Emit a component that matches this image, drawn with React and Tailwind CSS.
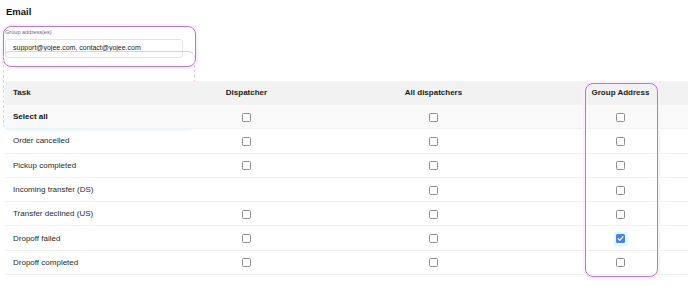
const rows = [
  { task: "Select all", bold: true, dispatcher: true, all: true, group: true },
  { task: "Order cancelled", dispatcher: true, all: true, group: true },
  { task: "Pickup completed", dispatcher: true, all: true, group: true },
  { task: "Incoming transfer (DS)", dispatcher: false, all: true, group: true },
  { task: "Transfer declined (US)", dispatcher: true, all: true, group: true },
  { task: "Dropoff failed", dispatcher: true, all: true, group: true, checked: true },
  { task: "Dropoff completed", dispatcher: true, all: true, group: true },
];

function Checkbox({ checked }) {
  if (checked) {
    return (
      <div className="w-[14px] h-[14px] bg-[#dcfbff] flex items-center justify-center">
        <div className="w-[9px] h-[9px] rounded-[1.5px] bg-[#4f7fe0] flex items-center justify-center">
          <svg width="7" height="7" viewBox="0 0 10 10" fill="none">
            <path d="M1.5 5.2 L4 7.6 L8.6 2.4" stroke="white" strokeWidth="1.8" strokeLinecap="round" strokeLinejoin="round" />
          </svg>
        </div>
      </div>
    );
  }
  return <div className="w-[9px] h-[9px] rounded-[1.5px] border border-[#8d8d8d] bg-white" />;
}

export default function App() {
  return (
    <div className="relative w-[688px] h-[287px] overflow-hidden bg-white font-['Liberation_Sans',Arial,sans-serif] text-[#222]">
      {/* Heading + group address input */}
      <div className="pl-[6px] pt-[5px]">
        <h2 className="text-[9.5px] font-bold leading-[13px] text-[#111]">Email</h2>
      </div>
      <div className="ml-[3px] mt-[8px] w-[193px] h-[41px] rounded-[8px] border-[1.5px] border-[#b27ad4] shadow-[0_0_0_2px_#fdeefb] relative">
        <div className="pl-[1px] pt-[2px] text-[5.6px] leading-[7px] text-[#7a5a86]">Group address(es)</div>
        <div className="ml-[1px] mt-[3px] w-[178px] h-[19px] rounded-[3px] border border-[#e3e3e3] flex items-center pl-[7px] text-[7px] text-[#1a1a1a]">
          support@yojee.com, contact@yojee.com
        </div>
      </div>

      {/* faint overlay annotation */}
      <div className="absolute left-[3px] top-[51px] w-[192px] h-[78px] rounded-[7px] border border-dashed [border-top-style:solid] [border-bottom-style:solid] border-[#f6bdf0] shadow-[0_2px_0_0_#e3fdff] pointer-events-none" />

      {/* Table */}
      <div className="absolute left-[5px] top-[81px] w-[750px]">
        <div className="grid grid-cols-[148px_187px_187px_187px] h-[24px] bg-[#f2f2f2] items-center text-[8px] font-bold text-[#1a1a1a]">
          <div className="pl-[8px]">Task</div>
          <div className="text-center">Dispatcher</div>
          <div className="text-center">All dispatchers</div>
          <div className="text-center">Group Address</div>
        </div>
        {rows.map((r) => (
          <div
            key={r.task}
            className={`grid grid-cols-[148px_187px_187px_187px] h-[24.3px] items-center border-b border-[#f0f0f0] text-[8px] ${
              r.bold ? "bg-[#f9f9f9] font-bold text-[#111]" : "text-[#2a2a2a]"
            }`}
          >
            <div className="pl-[8px] pt-[1px]">{r.task}</div>
            <div className="flex justify-center pt-[1px]">{r.dispatcher && <Checkbox />}</div>
            <div className="flex justify-center pt-[1px]">{r.all && <Checkbox />}</div>
            <div className="flex justify-center pt-[1px]">{r.group && <Checkbox checked={r.checked} />}</div>
          </div>
        ))}
      </div>

      {/* Group Address highlight */}
      <div className="absolute left-[585px] top-[83px] w-[73px] h-[194px] rounded-[8px] border-[1.5px] border-[#b27ad4] shadow-[0_0_0_2px_#fdeefb] pointer-events-none" />
    </div>
  );
}
